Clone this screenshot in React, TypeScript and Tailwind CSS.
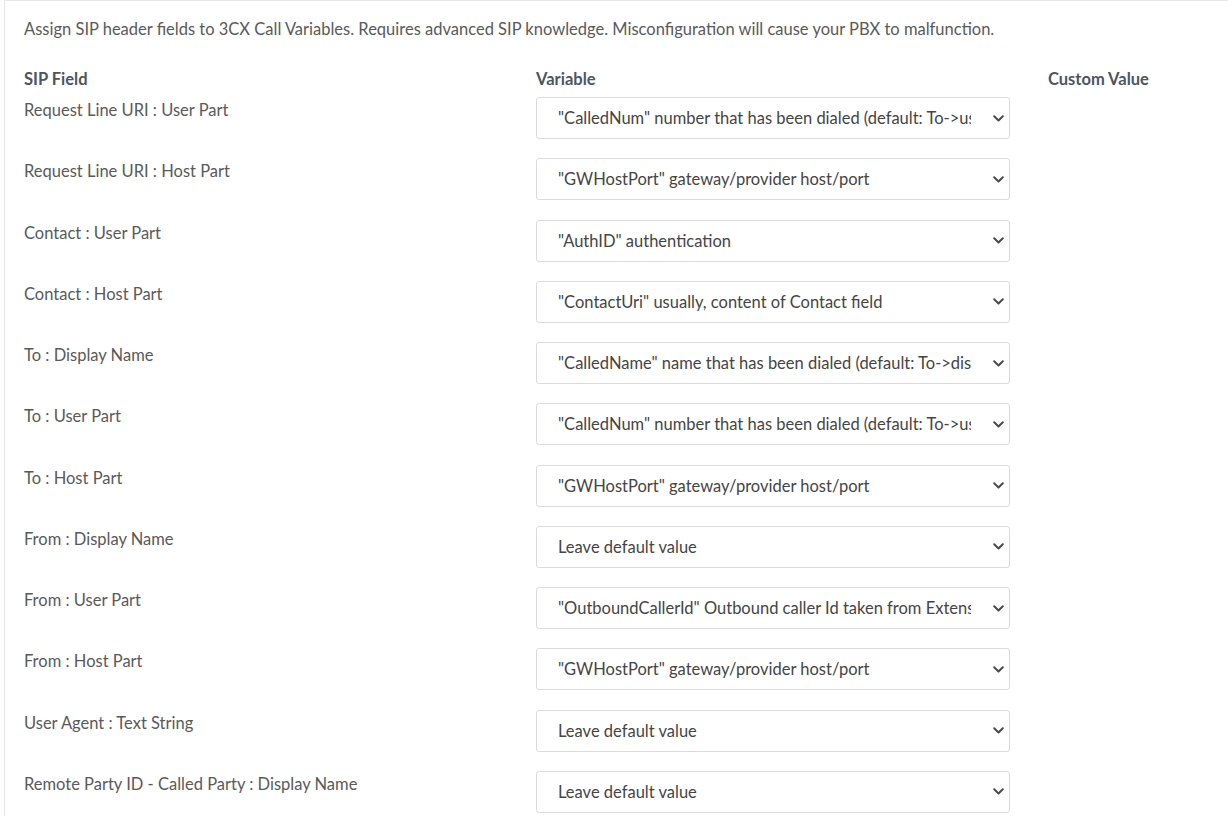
import React from 'react';

const rows: { field: string; variable: string }[] = [
  { field: 'Request Line URI : User Part', variable: '"CalledNum" number that has been dialed (default: To->user part)' },
  { field: 'Request Line URI : Host Part', variable: '"GWHostPort" gateway/provider host/port' },
  { field: 'Contact : User Part', variable: '"AuthID" authentication' },
  { field: 'Contact : Host Part', variable: '"ContactUri" usually, content of Contact field' },
  { field: 'To : Display Name', variable: '"CalledName" name that has been dialed (default: To->display name)' },
  { field: 'To : User Part', variable: '"CalledNum" number that has been dialed (default: To->user part)' },
  { field: 'To : Host Part', variable: '"GWHostPort" gateway/provider host/port' },
  { field: 'From : Display Name', variable: 'Leave default value' },
  { field: 'From : User Part', variable: '"OutboundCallerId" Outbound caller Id taken from Extension settings' },
  { field: 'From : Host Part', variable: '"GWHostPort" gateway/provider host/port' },
  { field: 'User Agent : Text String', variable: 'Leave default value' },
  { field: 'Remote Party ID - Called Party : Display Name', variable: 'Leave default value' },
];

const Chevron: React.FC = () => (
  <svg width="11" height="7" viewBox="0 0 11 7" fill="none">
    <path d="M1.2 1.2 L5.5 5.5 L9.8 1.2" stroke="#4a4a4a" strokeWidth="2" strokeLinecap="round" strokeLinejoin="round" />
  </svg>
);

const App: React.FC = () => {
  return (
    <div className="min-h-screen bg-white overflow-hidden" style={{ fontFamily: 'Lato, "Liberation Sans", sans-serif' }}>
      <div className="ml-[4px] border-l border-t border-[#e8e8e8] pl-[19px] pt-[16px] w-[1600px]">
        <p className="text-[16.5px] leading-[24px] text-[#5a5a5a]">
          Assign SIP header fields to 3CX Call Variables. Requires advanced SIP knowledge. Misconfiguration will cause your PBX to malfunction.
        </p>

        <div className="mt-[26px] grid grid-cols-[512px_512px_512px]">
          <div className="text-[16.5px] leading-[24px] font-bold text-[#4b5661]">SIP Field</div>
          <div className="text-[16.5px] leading-[24px] font-bold text-[#4b5661]">Variable</div>
          <div className="text-[16.5px] leading-[24px] font-bold text-[#4b5661]">Custom Value</div>
        </div>

        <div className="mt-[6px] flex flex-col">
          {rows.map((r, i) => (
            <div key={i} className="grid grid-cols-[512px_512px_512px] h-[61.27px]">
              <div className="pt-[1px] text-[16.5px] leading-[24px] text-[#5a5a5a]">{r.field}</div>
              <div>
                <div className="flex items-center h-[42px] w-[474px] border border-[#d9dcdf] rounded-[3px] bg-white pl-[21px] pr-[5px]">
                  <div className="flex-1 overflow-hidden whitespace-nowrap text-[16.5px] leading-[24px] text-[#454545] mr-[22px]">
                    {r.variable}
                  </div>
                  <Chevron />
                </div>
              </div>
              <div />
            </div>
          ))}
        </div>
      </div>
    </div>
  );
};

export default App;
